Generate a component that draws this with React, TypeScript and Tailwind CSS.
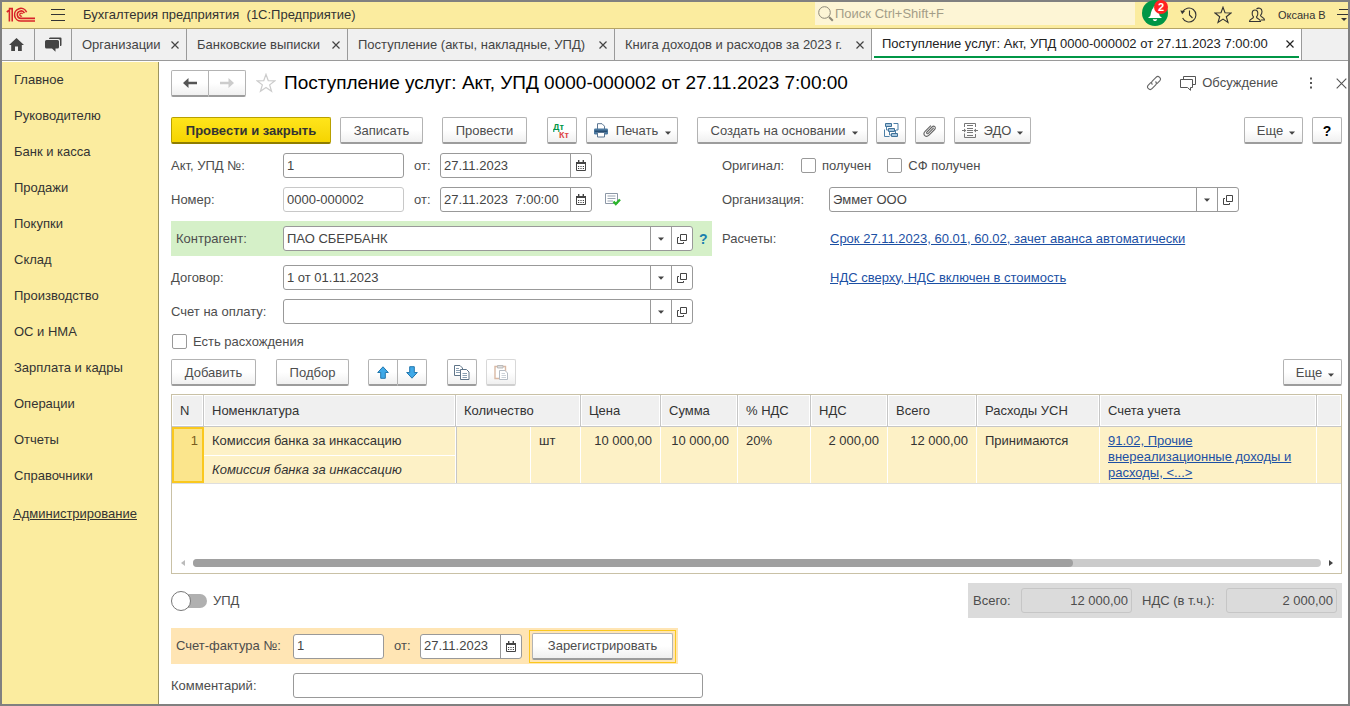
import { useState } from "react";
import type { ReactNode } from "react";
import clsx from "clsx";

const sections = [
  "Главное",
  "Руководителю",
  "Банк и касса",
  "Продажи",
  "Покупки",
  "Склад",
  "Производство",
  "ОС и НМА",
  "Зарплата и кадры",
  "Операции",
  "Отчеты",
  "Справочники",
];

const tabs = [
  { title: "Организации", width: "w-[115px]" },
  { title: "Банковские выписки", width: "w-[161px]" },
  { title: "Поступление (акты, накладные, УПД)", width: "w-[267px]" },
  { title: "Книга доходов и расходов за 2023 г.", width: "w-[257px]" },
];

const docTitle = "Поступление услуг: Акт, УПД 0000-000002 от 27.11.2023 7:00:00";

/* ---------- icons ---------- */

function Logo() {
  return (
    <svg width="30" height="16" viewBox="0 0 30 16" fill="none" stroke="#d8232a" aria-hidden="true">
      <path d="M0.8 5 L3.4 3 V14.6" strokeWidth="1.6" />
      <path d="M2.8 1.6 H6.2 V14.6" strokeWidth="1.6" />
      <path d="M20.6 5.2 A6.3 6.3 0 1 0 15.2 14 H29" strokeWidth="1.6" />
      <path d="M18.4 6.2 A3.7 3.7 0 1 0 15.2 11.4 H29" strokeWidth="1.6" />
      <path d="M16.6 7 A1.5 1.5 0 1 0 16 9" strokeWidth="1.2" />
    </svg>
  );
}

function Cross({ size = 8 }: { size?: number }) {
  return (
    <svg width={size} height={size} viewBox="0 0 8 8" stroke="currentColor" strokeWidth={size > 8 ? 0.8 : 1.2} aria-hidden="true">
      <path d="M0.5 0.5 L7.5 7.5 M7.5 0.5 L0.5 7.5" />
    </svg>
  );
}

function Caret({ className }: { className?: string }) {
  return (
    <svg width="6" height="4" viewBox="0 0 6 4" fill="#444" className={className} aria-hidden="true">
      <path d="M0 0.5 H6 L3 3.7 Z" />
    </svg>
  );
}

function Star({ size, color }: { size: number; color: string }) {
  return (
    <svg width={size} height={size} viewBox="0 0 18 18" fill="none" stroke={color} strokeWidth="1.1" aria-hidden="true">
      <path d="M9 1.2 L11 6.8 L17 7 L12.3 10.7 L14 16.5 L9 13.1 L4 16.5 L5.7 10.7 L1 7 L7 6.8 Z" />
    </svg>
  );
}

function Arrow({ left, color }: { left?: boolean; color: string }) {
  return (
    <svg width="14" height="10" viewBox="0 0 14 10" className={clsx(!left && "rotate-180")} aria-hidden="true">
      <path d="M0 5 L5.5 0 V3.8 H14 V6.2 H5.5 V10 Z" fill={color} />
    </svg>
  );
}

function CalendarIcon() {
  return (
    <svg width="10" height="11" viewBox="0 0 10 11" aria-hidden="true">
      <path d="M0.5 2.5 H9.5 V10.5 H0.5 Z" fill="#fff" stroke="#444" />
      <path d="M0 2 H10 V4 H0 Z M2 0 H3.4 V2 H2 Z M6.6 0 H8 V2 H6.6 Z" fill="#444" />
      <path d="M2 6.5 H8 M2 8.5 H8" stroke="#444" strokeDasharray="1.2 1.2" />
    </svg>
  );
}

function OpenIcon() {
  return (
    <svg width="10" height="10" viewBox="0 0 10 10" fill="none" stroke="#444" aria-hidden="true">
      <path d="M3.5 0.5 H9.5 V6.5 H3.5 Z" />
      <path d="M2 3.5 H0.5 V9.5 H6.5 V8" />
    </svg>
  );
}

function PrinterIcon() {
  return (
    <svg width="16" height="15" viewBox="0 0 16 15" aria-hidden="true">
      <path d="M4.5 6 V0.7 H9 L11.5 3.2 V6" fill="#fff" stroke="#5b7692" />
      <rect x="1" y="5.5" width="14" height="6" rx="1.2" fill="#4b789f" />
      <path d="M1.8 8.2 H14.2" stroke="#1f4468" strokeWidth="1.2" />
      <path d="M4.5 9.5 H11.5 V14 H4.5 Z" fill="#fff" stroke="#5b7692" />
    </svg>
  );
}

function StructureIcon() {
  return (
    <svg width="15" height="15" viewBox="0 0 15 15" aria-hidden="true">
      <g fill="#a8c6dd" stroke="#3f7199">
        <path d="M1.5 0.5 H7.5 V3.5 H1.5 Z M4.5 5.5 H10.5 V8.5 H4.5 Z M7.5 10.5 H13.5 V13.5 H7.5 Z" />
      </g>
      <path d="M9.5 0.5 H14 V7 H12 M0.5 6.5 V13.5 H5.5 M2.5 3.5 V7 H4.5 M5.5 8.5 V12 H7.5 M11.5 7 V10" fill="none" stroke="#4d7fa6" />
    </svg>
  );
}

function ClipIcon() {
  return (
    <svg width="14" height="14" viewBox="0 0 14 14" fill="none" stroke="#666" strokeWidth="1.1" strokeLinecap="round" aria-hidden="true">
      <path d="M10.4 4.2 L5.3 9.3 C4.2 10.4 2.9 9.1 4 8 L9 3 C11 1 13.6 3.4 11.6 5.5 L6 11.2 C3 14.2 -0.9 10.6 2.1 7.4 L7.6 1.9" />
    </svg>
  );
}

function EdoIcon() {
  return (
    <svg width="16" height="15" viewBox="0 0 16 15" fill="none" stroke="#777" aria-hidden="true">
      <path d="M2.5 4 V0.5 H13.5 V4 M2.5 10.5 V14.5 H13.5 V11 M5 2.5 H11 M5 5.5 H11 M5 7.5 H11 M5 9.5 H11 M5 12.5 H11" />
      <path d="M0 7.5 H3.5 M12.5 7.5 H16" />
      <path d="M2 5.5 L4.3 7.5 L2 9.5 Z M14 5.5 L11.7 7.5 L14 9.5 Z" fill="#777" stroke="none" />
    </svg>
  );
}

function MoveArrow({ down }: { down?: boolean }) {
  return (
    <svg width="12" height="13" viewBox="0 0 12 13" className={clsx(down && "rotate-180")} aria-hidden="true">
      <path d="M6 0.8 L11.3 6.5 H8.3 V12.3 H3.7 V6.5 H0.7 Z" fill="#3fa9e8" stroke="#2377ad" />
    </svg>
  );
}

function CopyIcon() {
  return (
    <svg width="16" height="15" viewBox="0 0 16 15" fill="#fff" stroke="#5f7488" aria-hidden="true">
      <path d="M0.5 0.5 H6 L8.5 3 V10.5 H0.5 Z" />
      <path d="M2 3.5 H5 M2 5.5 H7 M2 7.5 H7" stroke="#8ba0b3" />
      <path d="M6.5 4.5 H12.5 L15 7 V14.5 H6.5 Z" />
      <path d="M8.5 8.5 H13 M8.5 10.5 H13 M8.5 12.5 H13" stroke="#8ba0b3" />
    </svg>
  );
}

function PasteIcon() {
  return (
    <svg width="15" height="15" viewBox="0 0 15 15" fill="#fff" aria-hidden="true">
      <path d="M1 1.5 H11.5 V13.5 H1 Z" stroke="#d9b9a4" strokeWidth="1.4" />
      <path d="M3.5 0.5 H9 V3 H3.5 Z" fill="#ddd" stroke="#bbb" />
      <path d="M5.5 5.5 H11 L13.5 8 V14.5 H5.5 Z" stroke="#b5bcc4" />
      <path d="M7.5 8.5 H11 M7.5 10.5 H12 M7.5 12.5 H12" stroke="#ccd2d8" />
    </svg>
  );
}

function StatusIcon() {
  return (
    <svg width="16" height="13" viewBox="0 0 16 13" fill="none" aria-hidden="true">
      <path d="M0.5 0.5 H12.5 V10.5 H0.5 Z" stroke="#8c97a6" fill="#fff" />
      <path d="M2.5 3 H10.5 M2.5 5.5 H10.5 M2.5 8 H8" stroke="#9aa5b3" />
      <path d="M8.5 8.5 L10.8 11 L15 6.5" stroke="#2cb52c" strokeWidth="2.4" />
    </svg>
  );
}

/* ---------- controls ---------- */

type ButtonProps = {
  children: ReactNode;
  className?: string;
  label?: string;
};

function Button({ children, className, label }: ButtonProps) {
  return (
    <button
      type="button"
      aria-label={label}
      className={clsx(
        "flex h-[27px] shrink-0 items-center justify-center whitespace-nowrap rounded-[2px] border border-b-2 border-[#b3b3b3] border-b-[#9c9c9c] bg-linear-to-b from-white from-50% to-[#f0f0f0] pt-px",
        className,
      )}
    >
      {children}
    </button>
  );
}

type FieldProps = {
  id: string;
  value?: string;
  className: string;
  label?: string;
  kind?: "text" | "date" | "ref";
  readOnly?: boolean;
};

function Field({ id, value = "", className, label, kind = "text", readOnly }: FieldProps) {
  const [text, setText] = useState(value);

  return (
    <div
      className={clsx(
        "flex h-[25px] shrink-0 overflow-hidden rounded-[3px] border bg-white",
        readOnly ? "border-[#c8c8c8]" : "border-[#999]",
        className,
      )}
    >
      <input
        id={id}
        type="text"
        aria-label={label}
        value={text}
        readOnly={readOnly}
        onChange={(event) => setText(event.target.value)}
        className="min-w-0 flex-1 whitespace-pre px-[3px] text-[#444] outline-none"
      />
      {kind === "date" && (
        <button type="button" aria-label="Выбрать дату" className="flex w-[21px] items-center justify-center border-l border-[#999]">
          <CalendarIcon />
        </button>
      )}
      {kind === "ref" && (
        <>
          <button type="button" aria-label="Выбрать" className="flex w-[21px] items-center justify-center border-l border-[#999]">
            <Caret />
          </button>
          <button type="button" aria-label="Открыть" className="flex w-[21px] items-center justify-center border-l border-[#999]">
            <OpenIcon />
          </button>
        </>
      )}
    </div>
  );
}

function Check({ id, children }: { id: string; children: ReactNode }) {
  return (
    <label htmlFor={id} className="flex items-center gap-[6px]">
      <input
        id={id}
        type="checkbox"
        className="size-[15px] appearance-none rounded-[2px] border border-[#999] bg-white checked:bg-[#009646]"
      />
      {children}
    </label>
  );
}

/* ---------- page parts ---------- */

function TopBar() {
  return (
    <header className="flex h-[27px] items-center border-b border-[#b5a467] bg-[#fbec9f] pl-1 text-[#333]">
      <Logo />
      <button type="button" aria-label="Меню" className="ml-[15px]">
        <svg width="14" height="12" viewBox="0 0 14 12" stroke="#333" aria-hidden="true">
          <path d="M0 0.5 H14 M0 5.5 H14 M0 11.5 H14" />
        </svg>
      </button>
      <h1 className="ml-[18px] flex-1 whitespace-pre">Бухгалтерия предприятия  (1С:Предприятие)</h1>
      <label className="mb-[3px] flex h-[23px] w-80 items-center gap-px bg-[#fdf5d5] pl-[3px]">
        <svg width="16" height="16" viewBox="0 0 16 16" fill="none" stroke="#8d8877" aria-hidden="true">
          <circle cx="6.5" cy="6.5" r="5.8" />
          <path d="M11 11 L14.8 14.8" strokeWidth="2" />
        </svg>
        <input
          type="search"
          aria-label="Поиск"
          placeholder="Поиск Ctrl+Shift+F"
          className="min-w-0 flex-1 outline-none placeholder:text-[#a39d88]"
        />
      </label>
      <button type="button" aria-label="Оповещения" className="relative mb-1 ml-[7px] flex size-[26px] items-center justify-center rounded-full bg-[#009646]">
        <svg width="16" height="17" viewBox="0 0 16 17" fill="#fff" aria-hidden="true">
          <path d="M7.5 1 C9 1 9.4 2 9.4 3 C12 5 12 9 12.8 11 L15 13 H1 L3.2 11 C4 9 4 5 6.4 3 C6.4 2 6.8 1 7.5 1 Z M5.8 14.2 H10.2 C10 16.6 6 16.6 5.8 14.2 Z" />
        </svg>
        <span className="absolute top-0 right-0 flex size-[14px] items-center justify-center rounded-full bg-[#f22] text-[11px] font-bold text-white">
          2
        </span>
      </button>
      <div className="ml-3 flex items-center gap-4">
        <button type="button" aria-label="История">
          <svg width="18" height="18" viewBox="0 0 18 18" fill="none" stroke="#333" strokeWidth="1.1" aria-hidden="true">
            <path d="M2.6 6 A7 7 0 1 1 2.6 12" />
            <path d="M9.5 4.5 V9 L12.5 12" />
            <path d="M0.3 4.5 L5 5 L2.2 8.3 Z" fill="#333" stroke="none" />
          </svg>
        </button>
        <button type="button" aria-label="Избранное">
          <Star size={18} color="#333" />
        </button>
        <button type="button" aria-label="Пользователь">
          <svg width="18" height="16" viewBox="0 0 18 16" fill="none" stroke="#333" strokeWidth="1.1" aria-hidden="true">
            <path d="M1.5 14.5 C1.5 11.5 5.5 12 5.5 10 C3.5 8 3.5 3 7 3 C10.5 3 10.5 8 8.5 10 C8.5 12 12.5 11.5 12.5 14.5 Z" />
            <path d="M8.5 2.2 C10 0.4 14 0.8 14 4.5 C14 6.5 13.4 7.5 12.5 8.3 C12.5 10.5 16.5 10 16.5 13 H13" />
          </svg>
        </button>
      </div>
      <span className="ml-3 w-[58px] text-[11px]">Оксана В</span>
      <button type="button" aria-label="Настройки" className="overflow-hidden">
        <svg width="12" height="14" viewBox="0 0 12 14" stroke="#333" aria-hidden="true">
          <path d="M3 1.5 H12 M1 6.5 H12" />
          <path d="M5 10 H11 L8 13 Z" fill="#333" stroke="none" />
        </svg>
      </button>
    </header>
  );
}

function TabBar() {
  return (
    <nav className="flex h-8 border-b border-[#9a9a9a] bg-[#f0f0f0] text-[#444]">
      <button type="button" aria-label="Начальная страница" className="flex w-[33px] items-center justify-center border-r border-[#9a9a9a] pr-1">
        <svg width="15" height="13" viewBox="0 0 15 13" fill="#444" aria-hidden="true">
          <path d="M7.5 0 L15 7 H12.8 V13 H9 V8.5 H6 V13 H2.2 V7 H0 Z" />
        </svg>
      </button>
      <button type="button" aria-label="Обсуждения" className="flex w-[37px] items-center justify-center border-r border-[#9a9a9a]">
        <svg width="17" height="15" viewBox="0 0 17 15" fill="#444" aria-hidden="true">
          <path d="M5 0.5 H15.5 Q16.5 0.5 16.5 1.5 V8 Q16.5 9 15.5 9 H15 V3.5 Q15 2 13.5 2 H4 Q4 0.5 5 0.5 Z" />
          <path d="M1.5 3 H12.5 Q14 3 14 4.5 V10 Q14 11.5 12.5 11.5 H10.5 V14.8 L7 11.5 H1.5 Q0 11.5 0 10 V4.5 Q0 3 1.5 3 Z" />
        </svg>
      </button>
      {tabs.map((tab) => (
        <div key={tab.title} className={clsx("flex items-center justify-between border-r border-[#9a9a9a] pr-[7px] pl-[10px]", tab.width)}>
          <a href="#" className="whitespace-nowrap">{tab.title}</a>
          <button type="button" aria-label="Закрыть">
            <Cross />
          </button>
        </div>
      ))}
      <div className="flex w-[430px] border-r border-[#9a9a9a] bg-white px-[2px] pb-[2px] text-[#222]">
        <div className="flex flex-1 items-center justify-between border-b-2 border-[#009646] pt-[3px] pr-[5px] pl-[8px]">
          <a href="#" className="whitespace-nowrap">{docTitle}</a>
          <button type="button" aria-label="Закрыть">
            <Cross />
          </button>
        </div>
      </div>
    </nav>
  );
}

function Sidebar() {
  return (
    <aside className="mt-px w-[157px] shrink-0 border-r border-[#9c945f] bg-[#fbec9f] pt-[9px] text-[#333]">
      <ul>
        {sections.map((name) => (
          <li key={name}>
            <a href="#" className="flex h-9 items-start pl-3 leading-[18px]">{name}</a>
          </li>
        ))}
      </ul>
      <a href="#" className="ml-[11px] block pt-[2px] leading-[18px] underline">Администрирование</a>
    </aside>
  );
}

function DocHeader() {
  return (
    <div className="-mr-[5px] flex h-[26px] items-center">
      <div className="flex">
        <Button label="Назад" className="w-[38px] rounded-r-none">
          <Arrow left color="#555" />
        </Button>
        <Button label="Вперед" className="w-[37px] rounded-l-none border-l-0">
          <Arrow color="#ccc" />
        </Button>
      </div>
      <button type="button" aria-label="В избранное" className="ml-[10px]">
        <Star size={20} color="#ccc" />
      </button>
      <h2 className="ml-2 flex-1 whitespace-nowrap text-[19px] leading-6 text-black">{docTitle}</h2>
      <button type="button" aria-label="Ссылка">
        <svg width="16" height="16" viewBox="0 0 16 16" fill="none" stroke="#666" strokeWidth="1.1" aria-hidden="true">
          <path d="M6.5 9.5 C5 8 5.5 6.8 6.5 5.8 L10 2.3 C12.4 0 16 3.4 13.7 5.9 L11 8.6" />
          <path d="M9.5 6.5 C11 8 10.5 9.2 9.5 10.2 L6 13.7 C3.6 16 0 12.6 2.3 10.1 L5 7.4" />
        </svg>
      </button>
      <button type="button" className="ml-[18px] flex items-center gap-[6px]">
        <svg width="16" height="15" viewBox="0 0 16 15" fill="none" stroke="#555" aria-hidden="true">
          <path d="M3.5 3 V0.5 H15.5 V8.5 H13" />
          <path d="M0.5 3.5 H12.5 V11.5 H10.5 V14.3 L7.5 11.5 H0.5 Z" />
        </svg>
        Обсуждение
      </button>
      <button type="button" aria-label="Еще действия" className="ml-[31px]">
        <svg width="4" height="12" viewBox="0 0 4 12" fill="#555" aria-hidden="true">
          <path d="M1 0.5 H3 V2.5 H1 Z M1 5 H3 V7 H1 Z M1 9.5 H3 V11.5 H1 Z" />
        </svg>
      </button>
      <button type="button" aria-label="Закрыть" className="ml-[23px] text-[#555]">
        <Cross size={11} />
      </button>
    </div>
  );
}

function CommandBar() {
  return (
    <div className="mt-[21px] flex">
      <button
        type="button"
        className="h-[27px] w-40 rounded-[2px] border border-b-2 border-[#b8a000] border-b-[#8f7d00] bg-linear-to-b from-[#ffe51a] to-[#f5d400] pt-px font-bold text-[#333]"
      >
        Провести и закрыть
      </button>
      <Button className="ml-[9px] w-[83px]">Записать</Button>
      <Button className="ml-[19px] w-[85px]">Провести</Button>
      <Button className="ml-5 w-[30px]" label="Дебет Кредит">
        <svg width="18" height="18" viewBox="0 0 18 18" aria-hidden="true" className="font-bold">
          <text x="0" y="8" fontSize="9" fill="#009646">Дт</text>
          <text x="6" y="16" fontSize="9" fill="#e04545">Кт</text>
        </svg>
      </Button>
      <Button className="ml-[9px] w-[92px] gap-[7px]">
        <PrinterIcon />
        Печать
        <Caret className="mt-1" />
      </Button>
      <Button className="ml-[19px] w-[171px] gap-[7px] pl-1">
        Создать на основании
        <Caret className="mt-1" />
      </Button>
      <Button className="ml-2 w-[30px]" label="Структура подчиненности">
        <StructureIcon />
      </Button>
      <Button className="ml-[9px] w-[30px]" label="Присоединенные файлы">
        <ClipIcon />
      </Button>
      <Button className="ml-[9px] w-[77px] gap-[6px]">
        <EdoIcon />
        ЭДО
        <Caret className="mt-1" />
      </Button>
      <Button className="ml-auto w-[59px] gap-[6px] pl-[5px]">
        Еще
        <Caret className="mt-1" />
      </Button>
      <Button className="ml-[9px] w-[30px] text-sm font-bold text-black">?</Button>
    </div>
  );
}

function DocForm() {
  return (
    <div className="mt-[9px] flex gap-[10px]">
      <div className="w-[541px] shrink-0">
        <div className="flex h-[25px] items-center">
          <label htmlFor="act" className="w-28">Акт, УПД №:</label>
          <Field id="act" value="1" className="w-[121px]" />
          <label htmlFor="act-date" className="w-9 pl-[10px]">от:</label>
          <Field id="act-date" value="27.11.2023" kind="date" className="w-[152px]" />
        </div>
        <div className="mt-[9px] flex h-[25px] items-center">
          <label htmlFor="number" className="w-28">Номер:</label>
          <Field id="number" value="0000-000002" readOnly className="w-[121px]" />
          <label htmlFor="number-date" className="w-9 pl-[10px]">от:</label>
          <Field id="number-date" value="27.11.2023  7:00:00" kind="date" className="w-[152px]" />
          <span className="ml-[13px]">
            <StatusIcon />
          </span>
        </div>
        <div className="mt-[9px] flex h-[35px] items-center bg-[#d5f0c8]">
          <label htmlFor="partner" className="w-28 pl-[5px]">Контрагент:</label>
          <Field id="partner" value="ПАО СБЕРБАНК" kind="ref" className="w-[410px]" />
          <button type="button" className="ml-[6px] text-sm font-bold text-[#1a7fae]">?</button>
        </div>
        <div className="mt-[9px] flex h-[25px] items-center">
          <label htmlFor="contract" className="w-28">Договор:</label>
          <Field id="contract" value="1 от 01.11.2023" kind="ref" className="w-[410px]" />
        </div>
        <div className="mt-[9px] flex h-[25px] items-center">
          <label htmlFor="invoice" className="w-28">Счет на оплату:</label>
          <Field id="invoice" kind="ref" className="w-[410px]" />
        </div>
        <div className="mt-[10px] flex h-[15px] items-center pl-px">
          <Check id="diff">Есть расхождения</Check>
        </div>
      </div>

      <div className="min-w-0 flex-1">
        <div className="flex h-[25px] items-center">
          <span className="w-[79px]">Оригинал:</span>
          <Check id="received">получен</Check>
          <span className="w-4" />
          <Check id="sf-received">СФ получен</Check>
        </div>
        <div className="mt-[9px] flex h-[25px] items-center">
          <label htmlFor="org" className="w-[107px]">Организация:</label>
          <Field id="org" value="Эммет ООО" kind="ref" className="w-[410px]" />
        </div>
        <div className="mt-[9px] flex h-[35px] items-center">
          <span className="w-[108px]">Расчеты:</span>
          <a href="#" className="text-[#1c50a4] underline">Срок 27.11.2023, 60.01, 60.02, зачет аванса автоматически</a>
        </div>
        <div className="mt-[9px] flex h-[25px] items-center pl-[108px]">
          <a href="#" className="text-[#1c50a4] underline">НДС сверху, НДС включен в стоимость</a>
        </div>
      </div>
    </div>
  );
}

function TableBar() {
  return (
    <div className="mt-[10px] flex">
      <Button className="w-[85px]">Добавить</Button>
      <Button className="ml-5 w-[73px]">Подбор</Button>
      <Button className="ml-[19px] w-[30px] rounded-r-none" label="Переместить вверх">
        <MoveArrow />
      </Button>
      <Button className="w-[29px] rounded-l-none border-l-0" label="Переместить вниз">
        <MoveArrow down />
      </Button>
      <Button className="ml-5 w-[30px]" label="Копировать">
        <CopyIcon />
      </Button>
      <Button className="ml-[9px] w-[30px] border-[#d8d8d8] border-b-[#cfcfcf]" label="Вставить">
        <PasteIcon />
      </Button>
      <Button className="ml-auto w-[59px] gap-[6px] pl-[5px]">
        Еще
        <Caret className="mt-1" />
      </Button>
    </div>
  );
}

const head = "border-r border-b border-[#c6c6c6] pl-2 text-left font-normal shadow-[inset_0_0_0_1px_#fff]";
const cell = "border-r border-white bg-[#fdf1c6] px-2 pt-[6px] align-top";

function ItemsTable() {
  return (
    <div className="mt-2 flex h-[180px] flex-col justify-between overflow-hidden border border-[#c9c1a6] text-[#333]">
      <table className="w-full table-fixed border-separate border-spacing-0 border-b border-[#dedede] leading-4">
        <colgroup>
          <col className="w-8" />
          <col className="w-[252px]" />
          <col className="w-[75px]" />
          <col className="w-[50px]" />
          <col className="w-20" />
          <col className="w-[77px]" />
          <col className="w-[73px]" />
          <col className="w-[77px]" />
          <col className="w-[89px]" />
          <col className="w-[123px]" />
          <col className="w-[217px]" />
          <col />
        </colgroup>
        <thead>
          <tr className="h-8 bg-[#f0f0f0]">
            <th className={head}>N</th>
            <th className={head}>Номенклатура</th>
            <th className={head} colSpan={2}>Количество</th>
            <th className={head}>Цена</th>
            <th className={head}>Сумма</th>
            <th className={head}>% НДС</th>
            <th className={head}>НДС</th>
            <th className={head}>Всего</th>
            <th className={head}>Расходы УСН</th>
            <th className={head}>Счета учета</th>
            <th className="border-b border-[#c6c6c6] shadow-[inset_0_0_0_1px_#fff]" aria-label="Прочее" />
          </tr>
        </thead>
        <tbody>
          <tr className="h-[29px]">
            <td rowSpan={2} className="border-2 border-[#fac81e] bg-[#fbe58c] px-1 pt-1 text-right align-top text-[#7a5c1e]">1</td>
            <td className={clsx(cell, "border-b")}>Комиссия банка за инкассацию</td>
            <td rowSpan={2} className={clsx(cell, "border-l border-l-[#c6c6c6]")} />
            <td rowSpan={2} className={cell}>шт</td>
            <td rowSpan={2} className={clsx(cell, "text-right")}>10 000,00</td>
            <td rowSpan={2} className={clsx(cell, "text-right")}>10 000,00</td>
            <td rowSpan={2} className={cell}>20%</td>
            <td rowSpan={2} className={clsx(cell, "text-right")}>2 000,00</td>
            <td rowSpan={2} className={clsx(cell, "text-right")}>12 000,00</td>
            <td rowSpan={2} className={cell}>Принимаются</td>
            <td rowSpan={2} className={cell}>
              <a href="#" className="block text-[#1c50a4] underline">
                91.02, Прочие внереализационные доходы и расходы, &lt;...&gt;
              </a>
            </td>
            <td rowSpan={2} className="bg-[#fdf1c6]" />
          </tr>
          <tr className="h-[27px]">
            <td className={clsx(cell, "italic")}>Комиссия банка за инкассацию</td>
          </tr>
        </tbody>
      </table>
      <div className="flex items-center gap-2 pr-2 pb-[6px] pl-[9px]">
        <svg width="4" height="6" viewBox="0 0 4 6" fill="#bbb" aria-hidden="true">
          <path d="M4 0 V6 L0 3 Z" />
        </svg>
        <div className="h-2 flex-1 rounded-full bg-[#cbcbcb]">
          <div className="h-2 w-[78%] rounded-full bg-[#a0a0a0]" />
        </div>
        <svg width="4" height="6" viewBox="0 0 4 6" fill="#444" aria-hidden="true">
          <path d="M0 0 V6 L4 3 Z" />
        </svg>
      </div>
    </div>
  );
}

function Totals() {
  return (
    <div className="mt-[9px] flex items-center justify-between">
      <label htmlFor="upd" className="flex items-center gap-[6px]">
        <input
          id="upd"
          type="checkbox"
          role="switch"
          className="relative h-5 w-9 appearance-none before:absolute before:inset-y-[3px] before:right-0 before:left-2 before:rounded-full before:bg-[#b0b0b0] after:absolute after:top-0 after:left-0 after:size-5 after:rounded-full after:border after:border-[#777] after:bg-white checked:after:left-4"
        />
        УПД
      </label>
      <div className="flex h-[35px] items-center bg-[#dbdbdb] px-[5px]">
        <label htmlFor="total" className="w-12">Всего:</label>
        <input id="total" readOnly defaultValue="12 000,00" className="h-[25px] w-[111px] rounded-[3px] border border-[#c6c6c6] px-[3px] text-right" />
        <label htmlFor="total-vat" className="w-[94px] pl-[10px] whitespace-nowrap">НДС (в т.ч.):</label>
        <input id="total-vat" readOnly defaultValue="2 000,00" className="h-[25px] w-[111px] rounded-[3px] border border-[#c6c6c6] px-[3px] text-right" />
      </div>
    </div>
  );
}

function Footer() {
  return (
    <>
      <div className="mt-[10px] flex h-9 w-[507px] items-center bg-[#ffe5b4]">
        <label htmlFor="sf" className="w-[122px] pl-[5px] whitespace-nowrap">Счет-фактура №:</label>
        <Field id="sf" value="1" className="w-[91px]" />
        <label htmlFor="sf-date" className="w-9 pl-[10px]">от:</label>
        <Field id="sf-date" value="27.11.2023" kind="date" className="w-[102px]" />
        <div className="ml-[7px] border border-[#fac81e] p-[2px]">
          <Button className="w-[141px]">Зарегистрировать</Button>
        </div>
      </div>
      <div className="mt-[9px] flex items-center">
        <label htmlFor="comment" className="w-[122px]">Комментарий:</label>
        <Field id="comment" className="w-[410px]" />
      </div>
    </>
  );
}

export default function App() {
  return (
    <div className="flex min-h-screen flex-col border-2 border-[#808080] bg-white font-['Liberation_Sans',Arial,sans-serif] text-[13px] text-[#4d4d4d]">
      <TopBar />
      <TabBar />
      <div className="flex flex-1">
        <Sidebar />
        <main className="min-w-0 flex-1 pt-[9px] pr-[6px] pb-[5px] pl-3">
          <DocHeader />
          <CommandBar />
          <DocForm />
          <TableBar />
          <ItemsTable />
          <Totals />
          <Footer />
        </main>
      </div>
    </div>
  );
}
